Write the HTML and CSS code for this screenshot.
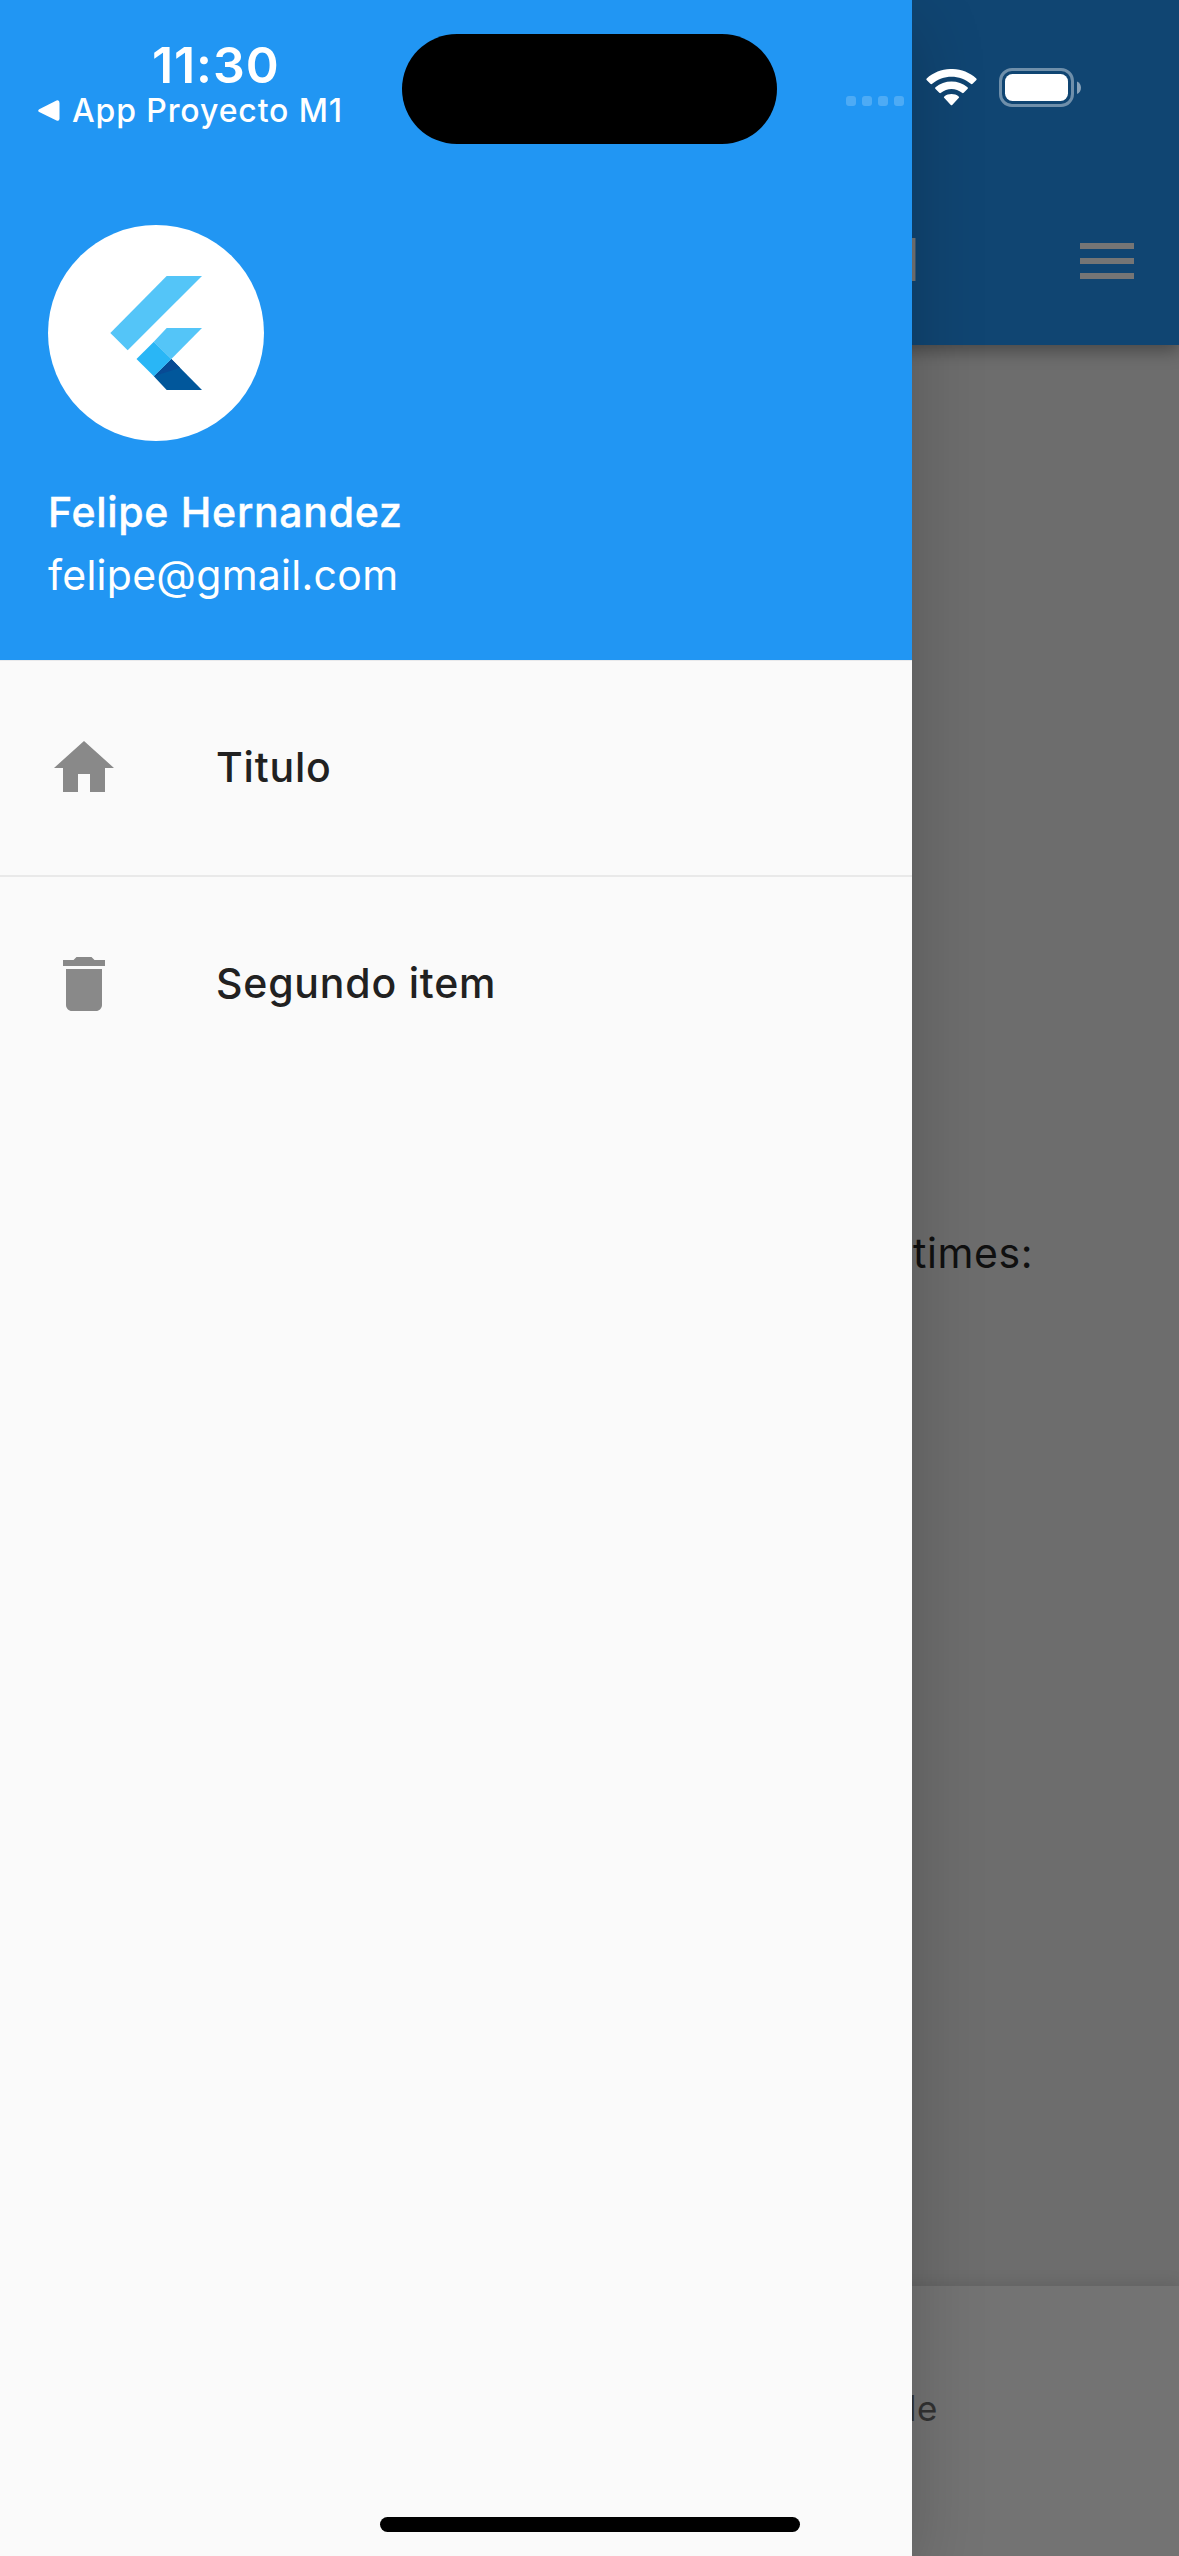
FILE: index.html
```html
<!DOCTYPE html>
<html lang="es">
<head>
<meta charset="utf-8">
<title>App Proyecto M1</title>
<link rel="stylesheet" href="styles.css">
</head>
<body>
<div class="screen">
  <div class="page">
    <header class="app-bar">
      <span class="app-title">l</span>
      <svg class="menu-icon" viewBox="0 0 54 36"><path d="M0 0h54v6H0zM0 15h54v6H0zM0 30h54v6H0z"/></svg>
    </header>
    <main class="content"><p class="counter-label">times:</p></main>
    <nav class="bottom-nav"><span class="nav-label">le</span></nav>
  </div>

  <aside class="drawer">
    <header class="account">
      <svg class="avatar" viewBox="54 45 648 648">
        <circle cx="378" cy="369" r="324" fill="#fff"/>
        <path fill="#54c5f8" d="M410 198H516L293 420.500 241 369z"/>
        <path fill="#54c5f8" d="M410 354H516L424 447 371.500 395z"/>
        <path fill="#01579b" d="M424 447L516 540H410L371.500 499z"/>
        <path fill="#084a94" d="M424 447L450 473 371.500 499z"/>
        <path fill="#29b6f6" d="M371.500 395L424 447 371.500 499 319.500 447z"/>
      </svg>
      <p class="name">Felipe Hernandez</p>
      <p class="email">felipe@gmail.com</p>
    </header>
    <ul class="menu">
      <li class="item">
        <svg class="item-icon" viewBox="0 0 24 24"><path d="M10 20v-6h4v6h5v-8h3L12 3 2 12h3v8z"/></svg>
        <span class="item-label">Titulo</span>
      </li>
      <li class="divider"></li>
      <li class="item">
        <svg class="item-icon" viewBox="0 0 24 24"><path d="M6 19c0 1.100.9 2 2 2h8c1.100 0 2-.9 2-2V7H6v12zM19 4h-3.500l-1-1h-5l-1 1H5v2h14V4z"/></svg>
        <span class="item-label">Segundo item</span>
      </li>
    </ul>
  </aside>

  <div class="status-bar">
    <div class="status-left">
      <span class="clock">11:30</span>
      <div class="back">
        <svg class="back-arrow" viewBox="0 0 22 22"><path d="M1.200 9.300L18.500.5Q21.500-.5 21.500 3V18.500Q21.500 21.500 18.500 20.500L1.200 12Q-.8 10.700 1.200 9.300z"/></svg>
        <span class="back-label">App Proyecto M1</span>
      </div>
    </div>
    <div class="island"></div>
    <div class="signal"><i></i><i></i><i></i><i></i></div>
    <svg class="wifi" viewBox="0 0 51 37">
      <path d="M.6 11Q0 10.200.7 9.500C14.500-3.200 36.500-3.200 50.300 9.500Q51 10.200 50.400 11L46.600 14.800Q45.700 15.500 44.800 14.800C34 5.400 17 5.400 6.200 14.800Q5.300 15.500 4.400 14.800z"/>
      <path d="M9.300 19.800Q8.700 19 9.500 18.300C18.300 10.400 32.700 10.400 41.500 18.300Q42.300 19 41.700 19.800L37.700 23.800Q36.900 24.500 36 23.800C30 18.700 21 18.700 15 23.800Q14.100 24.500 13.300 23.800z"/>
      <path d="M18.100 28.800Q17.500 28 18.300 27.400C22.400 24.300 28.600 24.300 32.700 27.400Q33.500 28 32.900 28.800L26.200 36Q25.500 36.700 24.800 36z"/>
    </svg>
    <svg class="battery" viewBox="0 0 82 39">
      <rect x="1.500" y="1.500" width="72" height="36" rx="11.500" fill="none" stroke="#fff" stroke-opacity=".4" stroke-width="3"/>
      <rect x="6" y="6" width="63" height="27" rx="7.500" fill="#fff"/>
      <path d="M78 13.500C83.300 15.500 83.300 24 78 26z" fill="#fff" fill-opacity=".5"/>
    </svg>
  </div>
  <div class="home-indicator"></div>
</div>
</body>
</html>
```
FILE: styles.css
```css
* { box-sizing: border-box; }
body { margin: 0; font-family: Inter, "Noto Sans", sans-serif; }
p, ul { margin: 0; padding: 0; }
ul { list-style: none; }
svg { display: block; flex: none; }
span, p { white-space: nowrap; }

.screen { position: relative; width: 1179px; height: 2556px; overflow: hidden; }

/* Dimmed page behind the drawer */
.page { height: 100%; display: flex; flex-direction: column; background: #6d6d6d; }
.app-bar {
  height: 345px; padding: 177px 45px 0 904px; flex: none;
  display: flex; align-items: center; justify-content: space-between;
  background: #104572; box-shadow: 0 6px 16px rgba(0, 0, 0, .34);
}
.app-title { font-size: 59px; font-weight: 600; line-height: 72px; margin-top: -2px; color: #757575; }
.menu-icon { width: 54px; height: 36px; fill: #757575; }
.content { flex: 1; display: flex; align-items: center; padding: 0 0 125px 913px; }
.counter-label { font-size: 41px; line-height: 60px; letter-spacing: .6px; color: #101010; }
.bottom-nav {
  height: 270px; flex: none; padding: 98px 0 0 908px;
  background: #737373; box-shadow: 0 -3px 14px rgba(0, 0, 0, .1);
}
.nav-label { display: block; font-size: 35px; line-height: 48px; color: #323232; letter-spacing: .4px; }

/* Drawer */
.drawer {
  position: absolute; top: 0; left: 0; width: 912px; height: 100%;
  background: #fafafa; box-shadow: 0 24px 70px rgba(0, 0, 0, .2);
}
.account { height: 661px; padding: 225px 48px 0; background: #2196f3; border-bottom: 1px solid #e9eaec; color: #fff; }
.avatar { width: 216px; height: 216px; }
.name { margin-top: 41px; font-size: 41px; font-weight: 500; line-height: 60px; letter-spacing: .72px; -webkit-text-stroke: .4px #fff; }
.email { margin-top: 3px; font-size: 41px; line-height: 60px; letter-spacing: .27px; }
.menu { padding-top: 23px; }
.item { height: 168px; padding: 0 48px; display: flex; align-items: center; gap: 96px; font-size: 41px; font-weight: 500; letter-spacing: .8px; color: #212121; }
.item-label { margin-top: -3px; }
.item-icon { width: 72px; height: 72px; fill: #898989; }
.divider { height: 48px; padding: 23px 0; }
.divider::before { content: ""; display: block; height: 2px; background: #e9e9e9; }

/* System status bar */
.status-bar { position: absolute; top: 0; left: 0; width: 100%; height: 177px; display: flex; align-items: flex-start; color: #fff; fill: #fff; }
.status-left { width: 402px; padding: 35px 0 0 38px; }
.clock { display: block; margin-left: 114px; font-size: 50px; font-weight: 600; line-height: 60px; letter-spacing: .9px; }
.back { display: flex; align-items: center; gap: 12px; height: 40px; }
.back-arrow { width: 22px; height: 22px; margin-top: -9px; }
.back-label { font-size: 32px; font-weight: 500; line-height: 40px; margin-top: -8px; letter-spacing: .88px; }
.island { width: 375px; height: 110px; margin-top: 34px; border-radius: 55px; background: #000; }
.signal { display: flex; gap: 6px; margin: 96px 0 0 69px; }
.signal i { width: 10px; height: 10px; border-radius: 3px; background: rgba(255, 255, 255, .2); }
.wifi { width: 51px; height: 37px; margin: 69px 0 0 22px; }
.battery { width: 82px; height: 39px; margin: 68px 0 0 22px; }

.home-indicator { position: absolute; left: 380px; bottom: 24px; width: 420px; height: 15px; border-radius: 8px; background: #000; }
```
